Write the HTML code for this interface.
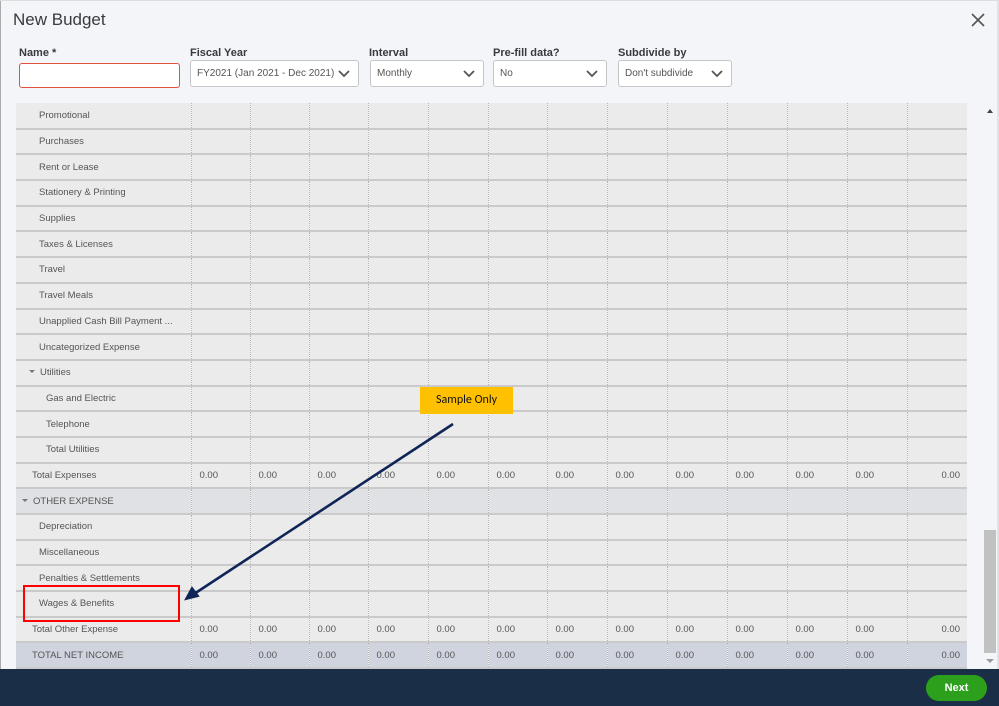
<!DOCTYPE html>
<html><head><style>
*{margin:0;padding:0;box-sizing:border-box}
body{width:999px;height:706px;background:#f4f5f8;font-family:"Liberation Sans",sans-serif;position:relative;overflow:hidden}
.t{position:absolute}
h1{position:absolute;left:13px;top:10px;font-size:17px;font-weight:normal;color:#393a3d}
.lbl{position:absolute;top:47px;font-size:11px;font-weight:bold;color:#393a3d}
.sel{position:absolute;top:60px;height:27px;background:#fff;border:1px solid #c4c6ca;border-radius:3px;font-size:10px;color:#555;padding:7px 6px}
.sel svg{position:absolute;right:8px;top:9px}
table{position:absolute;left:16px;top:103px;border-collapse:collapse;table-layout:fixed;width:951px}
td{height:25.7px;background:#ebebeb;border-bottom:2px solid #cacaca;border-left:1px dotted #b5b5b5;font-size:9.5px;color:#555;padding:0 0 0 8px;white-space:nowrap;overflow:hidden}
td:first-child{border-left:none;padding-left:23px}
tr.s td:first-child{padding-left:30px}
tr.tt td:first-child{padding-left:16px}
tr.h td{background:#e0e1e5}
tr.n td{background:#d0d4de}
td.r{text-align:right;padding-right:7px}
.car{display:inline-block;width:0;height:0;border-left:3px solid transparent;border-right:3px solid transparent;border-top:3px solid #777;margin:0 5px 2px -10px}
</style></head><body>
<div class="t" style="left:0;top:0;width:1px;height:706px;background:#aaa"></div>
<div class="t" style="left:0;top:0;width:999px;height:1px;background:#ddd"></div>
<h1>New Budget</h1>
<svg class="t" style="left:971px;top:13px" width="14" height="14"><path d="M1 1L13 13M13 1L1 13" stroke="#555" stroke-width="1.6"/></svg>
<div class="lbl" style="left:19px">Name *</div>
<div class="lbl" style="left:190px">Fiscal Year</div>
<div class="lbl" style="left:369px">Interval</div>
<div class="lbl" style="left:493px">Pre-fill data?</div>
<div class="lbl" style="left:618px">Subdivide by</div>
<div class="sel" style="left:19px;width:161px;border-color:#e0533f;top:63px;height:25px"></div>
<div class="sel" style="left:190px;width:169px">FY2021 (Jan 2021 - Dec 2021)<svg width="12" height="8"><path d="M1 1L6 6L11 1" stroke="#555" stroke-width="1.8" fill="none"/></svg></div>
<div class="sel" style="left:370px;width:114px">Monthly<svg width="12" height="8"><path d="M1 1L6 6L11 1" stroke="#555" stroke-width="1.8" fill="none"/></svg></div>
<div class="sel" style="left:493px;width:114px">No<svg width="12" height="8"><path d="M1 1L6 6L11 1" stroke="#555" stroke-width="1.8" fill="none"/></svg></div>
<div class="sel" style="left:618px;width:114px">Don't subdivide<svg width="12" height="8"><path d="M1 1L6 6L11 1" stroke="#555" stroke-width="1.8" fill="none"/></svg></div>

<table>
<colgroup><col style="width:175px"><col style="width:59px"><col style="width:59px"><col style="width:59px"><col style="width:60px"><col style="width:60px"><col style="width:59px"><col style="width:60px"><col style="width:60px"><col style="width:60px"><col style="width:60px"><col style="width:60px"><col style="width:60px"><col style="width:60px"></colgroup>
<tr><td>Promotional</td><td></td><td></td><td></td><td></td><td></td><td></td><td></td><td></td><td></td><td></td><td></td><td></td><td></td></tr>
<tr><td>Purchases</td><td></td><td></td><td></td><td></td><td></td><td></td><td></td><td></td><td></td><td></td><td></td><td></td><td></td></tr>
<tr><td>Rent or Lease</td><td></td><td></td><td></td><td></td><td></td><td></td><td></td><td></td><td></td><td></td><td></td><td></td><td></td></tr>
<tr><td>Stationery &amp; Printing</td><td></td><td></td><td></td><td></td><td></td><td></td><td></td><td></td><td></td><td></td><td></td><td></td><td></td></tr>
<tr><td>Supplies</td><td></td><td></td><td></td><td></td><td></td><td></td><td></td><td></td><td></td><td></td><td></td><td></td><td></td></tr>
<tr><td>Taxes &amp; Licenses</td><td></td><td></td><td></td><td></td><td></td><td></td><td></td><td></td><td></td><td></td><td></td><td></td><td></td></tr>
<tr><td>Travel</td><td></td><td></td><td></td><td></td><td></td><td></td><td></td><td></td><td></td><td></td><td></td><td></td><td></td></tr>
<tr><td>Travel Meals</td><td></td><td></td><td></td><td></td><td></td><td></td><td></td><td></td><td></td><td></td><td></td><td></td><td></td></tr>
<tr><td>Unapplied Cash Bill Payment ...</td><td></td><td></td><td></td><td></td><td></td><td></td><td></td><td></td><td></td><td></td><td></td><td></td><td></td></tr>
<tr><td>Uncategorized Expense</td><td></td><td></td><td></td><td></td><td></td><td></td><td></td><td></td><td></td><td></td><td></td><td></td><td></td></tr>
<tr><td><span class="car"></span>Utilities</td><td></td><td></td><td></td><td></td><td></td><td></td><td></td><td></td><td></td><td></td><td></td><td></td><td></td></tr>
<tr class="s"><td>Gas and Electric</td><td></td><td></td><td></td><td></td><td></td><td></td><td></td><td></td><td></td><td></td><td></td><td></td><td></td></tr>
<tr class="s"><td>Telephone</td><td></td><td></td><td></td><td></td><td></td><td></td><td></td><td></td><td></td><td></td><td></td><td></td><td></td></tr>
<tr class="s"><td>Total Utilities</td><td></td><td></td><td></td><td></td><td></td><td></td><td></td><td></td><td></td><td></td><td></td><td></td><td></td></tr>
<tr class="tt"><td>Total Expenses</td><td>0.00</td><td>0.00</td><td>0.00</td><td>0.00</td><td>0.00</td><td>0.00</td><td>0.00</td><td>0.00</td><td>0.00</td><td>0.00</td><td>0.00</td><td>0.00</td><td class="r">0.00</td></tr>
<tr class="tt h"><td><span class="car"></span>OTHER EXPENSE</td><td></td><td></td><td></td><td></td><td></td><td></td><td></td><td></td><td></td><td></td><td></td><td></td><td></td></tr>
<tr><td>Depreciation</td><td></td><td></td><td></td><td></td><td></td><td></td><td></td><td></td><td></td><td></td><td></td><td></td><td></td></tr>
<tr><td>Miscellaneous</td><td></td><td></td><td></td><td></td><td></td><td></td><td></td><td></td><td></td><td></td><td></td><td></td><td></td></tr>
<tr><td>Penalties &amp; Settlements</td><td></td><td></td><td></td><td></td><td></td><td></td><td></td><td></td><td></td><td></td><td></td><td></td><td></td></tr>
<tr><td>Wages &amp; Benefits</td><td></td><td></td><td></td><td></td><td></td><td></td><td></td><td></td><td></td><td></td><td></td><td></td><td></td></tr>
<tr class="tt"><td>Total Other Expense</td><td>0.00</td><td>0.00</td><td>0.00</td><td>0.00</td><td>0.00</td><td>0.00</td><td>0.00</td><td>0.00</td><td>0.00</td><td>0.00</td><td>0.00</td><td>0.00</td><td class="r">0.00</td></tr>
<tr class="tt n"><td>TOTAL NET INCOME</td><td>0.00</td><td>0.00</td><td>0.00</td><td>0.00</td><td>0.00</td><td>0.00</td><td>0.00</td><td>0.00</td><td>0.00</td><td>0.00</td><td>0.00</td><td>0.00</td><td class="r">0.00</td></tr>
</table>

<div class="t" style="left:987px;top:109px;width:0;height:0;border-left:3px solid transparent;border-right:3px solid transparent;border-bottom:4px solid #444"></div>
<div class="t" style="left:984px;top:530px;width:12px;height:123px;background:#c1c1c1"></div>
<div class="t" style="left:986px;top:659px;width:0;height:0;border-left:4px solid transparent;border-right:4px solid transparent;border-top:4px solid #999"></div>
<div class="t" style="left:997px;top:0;width:2px;height:706px;background:#e0e2e6"></div>

<div class="t" style="left:420px;top:387px;width:93px;height:27px;background:#ffc000;font-family:Carlito,'Liberation Sans',sans-serif;font-size:12px;color:#111;text-align:center;line-height:27px">Sample Only</div>
<svg class="t" style="left:0;top:0" width="999" height="706"><line x1="453" y1="424" x2="194" y2="594" stroke="#0f2557" stroke-width="2.6"/><path d="M186 599L192 588L198 596Z" fill="#0f2557" stroke="#0f2557" stroke-width="2"/></svg>
<div class="t" style="left:23px;top:585px;width:157px;height:37px;border:2px solid #f00"></div>

<div class="t" style="left:0;top:669px;width:999px;height:37px;background:#1b2e47"></div>
<div class="t" style="left:926px;top:675px;width:61px;height:26px;background:#2ca01c;border-radius:13px;color:#fff;font-weight:bold;font-size:11px;text-align:center;line-height:26px">Next</div>
</body></html>
